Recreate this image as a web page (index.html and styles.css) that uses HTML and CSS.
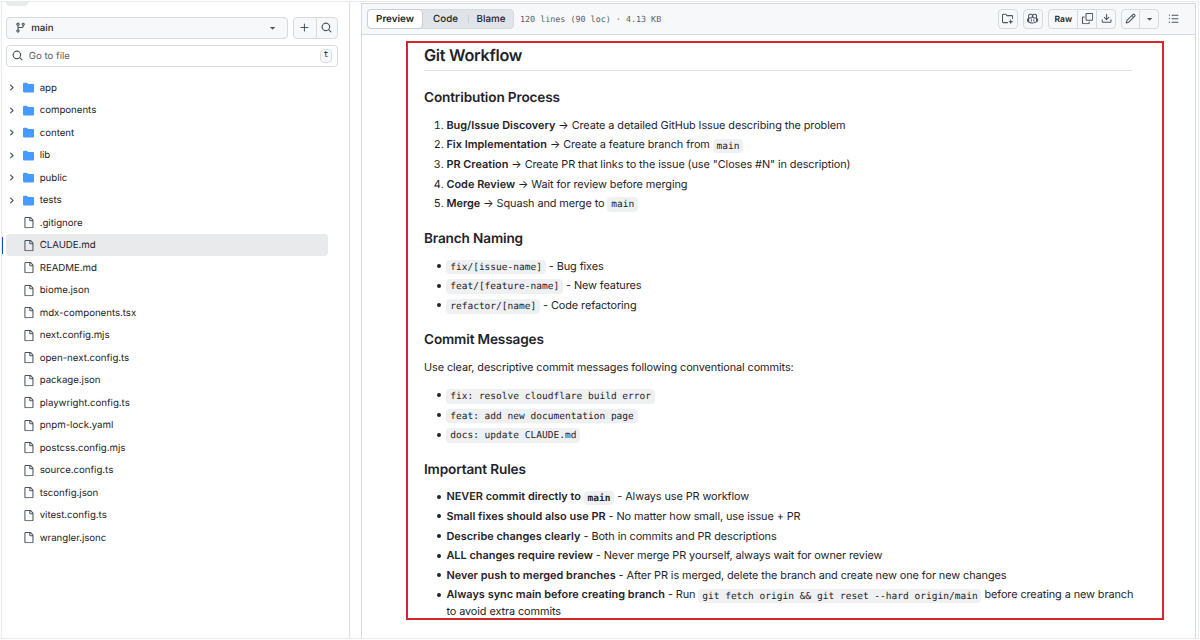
FILE: index.html
```html
<!DOCTYPE html>
<html lang="en">
<head>
<meta charset="utf-8">
<title>CLAUDE.md</title>
<link rel="stylesheet" href="styles.css">
</head>
<body>
<svg class="defs" width="0" height="0">
  <symbol id="branch" viewBox="0 0 16 16"><path d="M9.5 3.25a2.25 2.25 0 1 1 3 2.122V6A2.5 2.5 0 0 1 10 8.5H6a1 1 0 0 0-1 1v1.128a2.251 2.251 0 1 1-1.5 0V5.372a2.25 2.25 0 1 1 1.5 0v1.836A2.493 2.493 0 0 1 6 7h4a1 1 0 0 0 1-1v-.628A2.25 2.25 0 0 1 9.5 3.25Zm-6 0a.75.75 0 1 0 1.5 0 .75.75 0 0 0-1.5 0Zm8.25-.75a.75.75 0 1 0 0 1.5.75.75 0 0 0 0-1.5ZM4.25 12a.75.75 0 1 0 0 1.5.75.75 0 0 0 0-1.5Z"/></symbol>
  <symbol id="search" viewBox="0 0 16 16"><path d="M10.68 11.74a6 6 0 0 1-7.922-8.982 6 6 0 0 1 8.982 7.922l3.04 3.04a.749.749 0 0 1-.326 1.275.749.749 0 0 1-.734-.215ZM11.5 7a4.499 4.499 0 1 0-8.997 0A4.499 4.499 0 0 0 11.5 7Z"/></symbol>
  <symbol id="plus" viewBox="0 0 16 16"><path d="M7.75 2a.75.75 0 0 1 .75.75V7h4.25a.75.75 0 0 1 0 1.5H8.5v4.25a.75.75 0 0 1-1.5 0V8.5H2.75a.75.75 0 0 1 0-1.5H7V2.75A.75.75 0 0 1 7.75 2Z"/></symbol>
  <symbol id="caret" viewBox="0 0 16 16"><path d="m4.427 7.427 3.396 3.396a.25.25 0 0 0 .354 0l3.396-3.396A.25.25 0 0 0 11.396 7H4.604a.25.25 0 0 0-.177.427Z"/></symbol>
  <symbol id="chevron" viewBox="0 0 12 12"><path d="M4.7 10c-.2 0-.4-.1-.5-.2-.3-.3-.3-.8 0-1.1L6.9 6 4.2 3.300c-.3-.3-.3-.8 0-1.100.3-.3.8-.3 1.100 0l3.300 3.200c.3.3.3.8 0 1.100L5.300 9.700c-.2.2-.4.3-.6.3Z"/></symbol>
  <symbol id="folder" viewBox="0 0 16 16"><path d="M1.75 1A1.75 1.75 0 0 0 0 2.750v10.500C0 14.216.784 15 1.750 15h12.500A1.750 1.750 0 0 0 16 13.250v-8.500A1.750 1.750 0 0 0 14.250 3H7.500a.25.25 0 0 1-.2-.1l-.9-1.200C6.070 1.260 5.550 1 5 1H1.750Z"/></symbol>
  <symbol id="file" viewBox="0 0 16 16"><path d="M2 1.75C2 .784 2.784 0 3.750 0h6.586c.464 0 .909.184 1.237.513l2.914 2.914c.329.328.513.773.513 1.237v9.586A1.750 1.750 0 0 1 13.250 16h-9.500A1.750 1.750 0 0 1 2 14.250Zm1.750-.25a.25.25 0 0 0-.25.25v12.500c0 .138.112.25.25.25h9.500a.25.25 0 0 0 .25-.25V6h-2.750A1.750 1.750 0 0 1 9 4.250V1.500Zm6.750.062V4.250c0 .138.112.25.25.25h2.688l-.011-.013-2.914-2.914-.013-.011Z"/></symbol>
  <symbol id="copy" viewBox="0 0 16 16"><path d="M0 6.750C0 5.784.784 5 1.750 5h1.500a.75.75 0 0 1 0 1.500h-1.500a.25.25 0 0 0-.25.25v7.500c0 .138.112.25.25.25h7.500a.25.25 0 0 0 .25-.25v-1.500a.75.75 0 0 1 1.500 0v1.500A1.750 1.750 0 0 1 9.250 16h-7.500A1.750 1.750 0 0 1 0 14.250Z"/><path d="M5 1.750C5 .784 5.784 0 6.750 0h7.500C15.216 0 16 .784 16 1.750v7.500A1.750 1.750 0 0 1 14.250 11h-7.500A1.750 1.750 0 0 1 5 9.250Zm1.750-.25a.25.25 0 0 0-.25.25v7.500c0 .138.112.25.25.25h7.500a.25.25 0 0 0 .25-.25v-7.500a.25.25 0 0 0-.25-.25Z"/></symbol>
  <symbol id="download" viewBox="0 0 16 16"><path d="M2.750 14A1.750 1.750 0 0 1 1 12.250v-2.500a.75.75 0 0 1 1.500 0v2.500c0 .138.112.25.25.25h10.500a.25.25 0 0 0 .25-.25v-2.500a.75.75 0 0 1 1.500 0v2.500A1.750 1.750 0 0 1 13.250 14Z"/><path d="M7.250 7.689V2a.75.75 0 0 1 1.500 0v5.689l1.970-1.969a.749.749 0 1 1 1.060 1.060l-3.250 3.250a.749.749 0 0 1-1.060 0L4.220 6.780a.749.749 0 1 1 1.060-1.060l1.970 1.969Z"/></symbol>
  <symbol id="pencil" viewBox="0 0 16 16"><path d="M11.013 1.427a1.750 1.750 0 0 1 2.474 0l1.086 1.086a1.750 1.750 0 0 1 0 2.474l-8.610 8.610c-.21.21-.47.364-.756.445l-3.251.930a.75.75 0 0 1-.927-.928l.929-3.250c.081-.286.235-.547.445-.758l8.610-8.610Zm.176 4.823L9.750 4.810l-6.286 6.287a.253.253 0 0 0-.064.108l-.558 1.953 1.953-.558a.253.253 0 0 0 .108-.064Zm1.238-3.763a.25.25 0 0 0-.354 0L10.811 3.750l1.439 1.440 1.263-1.263a.25.25 0 0 0 0-.354Z"/></symbol>
  <symbol id="list" viewBox="0 0 16 16"><path d="M5.750 2.500h8.500a.75.75 0 0 1 0 1.500h-8.500a.75.75 0 0 1 0-1.500Zm0 5h8.500a.75.75 0 0 1 0 1.500h-8.500a.75.75 0 0 1 0-1.500Zm0 5h8.500a.75.75 0 0 1 0 1.500h-8.500a.75.75 0 0 1 0-1.500ZM2 14a1 1 0 1 1 0-2 1 1 0 0 1 0 2Zm1-6a1 1 0 1 1-2 0 1 1 0 0 1 2 0ZM2 4a1 1 0 1 1 0-2 1 1 0 0 1 0 2Z"/></symbol>
  <symbol id="newspace" viewBox="0 0 16 16"><path d="M8 13.750H2A1.250 1.250 0 0 1 .75 12.500V3A1.250 1.250 0 0 1 2 1.750h3c.4 0 .8.2 1 .5l.8 1.100c.2.3.5.4.9.4H14A1.250 1.250 0 0 1 15.250 5v3" fill="none" stroke="currentColor" stroke-width="1.500" stroke-linecap="round"/><path d="M12.500 8.500 13.500 11.500 16.300 12.500 13.500 13.500 12.500 16.300 11.500 13.500 8.700 12.500 11.500 11.500Z"/></symbol>
  <symbol id="copilot" viewBox="0 0 16 16"><path d="M7.998 15.035c-4.562 0-7.873-2.914-7.998-3.749V9.338c.085-.628.677-1.686 1.588-2.065.013-.07.024-.143.036-.218.029-.183.060-.384.126-.612-.201-.508-.254-1.084-.254-1.656 0-.870.128-1.769.693-2.484.579-.733 1.494-1.124 2.724-1.261 1.206-.134 2.262.034 2.944.765.050.053.096.108.139.165.044-.057.094-.112.143-.165.682-.731 1.738-.899 2.944-.765 1.230.137 2.145.528 2.724 1.261.566.715.693 1.614.693 2.484 0 .572-.053 1.148-.254 1.656.066.228.098.429.126.612.012.076.024.148.037.218.924.385 1.522 1.471 1.591 2.095v1.872c0 .766-3.351 3.795-8.002 3.795Zm0-1.485c2.280 0 4.584-1.110 5.002-1.433V7.862l-.023-.116c-.490.210-1.075.291-1.727.291-1.146 0-2.059-.327-2.710-.991A3.222 3.222 0 0 1 8 6.303a3.240 3.240 0 0 1-.544.743c-.650.664-1.563.991-2.710.991-.652 0-1.236-.081-1.727-.291l-.023.116v4.255c.419.323 2.722 1.433 5.002 1.433ZM6.762 2.830c-.193-.206-.637-.413-1.682-.297-1.019.113-1.479.404-1.713.700-.247.312-.369.789-.369 1.554 0 .793.129 1.171.308 1.371.162.181.519.379 1.442.379.853 0 1.339-.235 1.638-.540.315-.322.527-.827.617-1.553.117-.935-.037-1.395-.241-1.614Zm4.155-.297c-1.044-.116-1.488.091-1.681.297-.204.219-.359.679-.242 1.614.091.726.303 1.231.618 1.553.299.305.784.540 1.638.540.922 0 1.280-.198 1.442-.379.179-.200.308-.578.308-1.371 0-.765-.123-1.242-.370-1.554-.233-.296-.693-.587-1.713-.700Z"/><path d="M6.250 9.037a.75.75 0 0 1 .75.75v1.501a.75.75 0 0 1-1.500 0V9.787a.75.75 0 0 1 .75-.75Zm4.250.75v1.501a.75.75 0 0 1-1.500 0V9.787a.75.75 0 0 1 1.500 0Z"/></symbol>
</svg>

<div class="window">
  <aside class="sidebar">
    <div class="stub"></div>
    <div class="ref-row">
      <div class="branch-select"><svg class="icon"><use href="#branch"/></svg><span class="branch-name">main</span><svg class="icon"><use href="#caret"/></svg></div>
      <div class="group">
        <span class="cell plus-cell"><svg class="icon"><use href="#plus"/></svg></span>
        <span class="cell search-cell"><svg class="icon"><use href="#search"/></svg></span>
      </div>
    </div>
    <div class="file-search"><svg class="icon"><use href="#search"/></svg><span class="placeholder">Go to file</span><kbd class="key">t</kbd></div>
    <ul class="tree">
      <li class="node"><svg class="chev"><use href="#chevron"/></svg><svg class="icon dir"><use href="#folder"/></svg><span class="name">app</span></li>
      <li class="node"><svg class="chev"><use href="#chevron"/></svg><svg class="icon dir"><use href="#folder"/></svg><span class="name">components</span></li>
      <li class="node"><svg class="chev"><use href="#chevron"/></svg><svg class="icon dir"><use href="#folder"/></svg><span class="name">content</span></li>
      <li class="node"><svg class="chev"><use href="#chevron"/></svg><svg class="icon dir"><use href="#folder"/></svg><span class="name">lib</span></li>
      <li class="node"><svg class="chev"><use href="#chevron"/></svg><svg class="icon dir"><use href="#folder"/></svg><span class="name">public</span></li>
      <li class="node"><svg class="chev"><use href="#chevron"/></svg><svg class="icon dir"><use href="#folder"/></svg><span class="name">tests</span></li>
      <li class="node leaf"><svg class="icon"><use href="#file"/></svg><span class="name">.gitignore</span></li>
      <li class="node leaf current"><svg class="icon"><use href="#file"/></svg><span class="name">CLAUDE.md</span></li>
      <li class="node leaf"><svg class="icon"><use href="#file"/></svg><span class="name">README.md</span></li>
      <li class="node leaf"><svg class="icon"><use href="#file"/></svg><span class="name">biome.json</span></li>
      <li class="node leaf"><svg class="icon"><use href="#file"/></svg><span class="name">mdx-components.tsx</span></li>
      <li class="node leaf"><svg class="icon"><use href="#file"/></svg><span class="name">next.config.mjs</span></li>
      <li class="node leaf"><svg class="icon"><use href="#file"/></svg><span class="name">open-next.config.ts</span></li>
      <li class="node leaf"><svg class="icon"><use href="#file"/></svg><span class="name">package.json</span></li>
      <li class="node leaf"><svg class="icon"><use href="#file"/></svg><span class="name">playwright.config.ts</span></li>
      <li class="node leaf"><svg class="icon"><use href="#file"/></svg><span class="name">pnpm-lock.yaml</span></li>
      <li class="node leaf"><svg class="icon"><use href="#file"/></svg><span class="name">postcss.config.mjs</span></li>
      <li class="node leaf"><svg class="icon"><use href="#file"/></svg><span class="name">source.config.ts</span></li>
      <li class="node leaf"><svg class="icon"><use href="#file"/></svg><span class="name">tsconfig.json</span></li>
      <li class="node leaf"><svg class="icon"><use href="#file"/></svg><span class="name">vitest.config.ts</span></li>
      <li class="node leaf"><svg class="icon"><use href="#file"/></svg><span class="name">wrangler.jsonc</span></li>
    </ul>
  </aside>

  <main class="panel">
    <header class="toolbar">
      <div class="tabs"><span class="tab active">Preview</span><span class="tab code-tab">Code</span><span class="tab blame-tab">Blame</span></div>
      <span class="meta">120 lines (90 loc) · 4.13 KB</span>
      <div class="actions">
        <div class="group"><span class="cell"><svg class="icon"><use href="#newspace"/></svg></span></div>
        <div class="group"><span class="cell"><svg class="icon"><use href="#copilot"/></svg></span></div>
        <div class="group"><span class="cell raw">Raw</span><span class="cell"><svg class="icon"><use href="#copy"/></svg></span><span class="cell"><svg class="icon"><use href="#download"/></svg></span></div>
        <div class="group edit"><span class="cell"><svg class="icon"><use href="#pencil"/></svg></span><span class="cell"><svg class="icon"><use href="#caret"/></svg></span></div>
        <svg class="icon outline"><use href="#list"/></svg>
      </div>
    </header>
    <article class="markdown">
      <h2>Git Workflow</h2>
      <h3>Contribution Process</h3>
      <ol>
        <li><strong>Bug/Issue Discovery</strong> → Create a detailed GitHub Issue describing the problem</li>
        <li><strong>Fix Implementation</strong> → Create a feature branch from <code>main</code></li>
        <li><strong>PR Creation</strong> → Create PR that links to the issue (use "Closes #N" in description)</li>
        <li><strong>Code Review</strong> → Wait for review before merging</li>
        <li><strong>Merge</strong> → Squash and merge to <code>main</code></li>
      </ol>
      <h3>Branch Naming</h3>
      <ul>
        <li><code>fix/[issue-name]</code> - Bug fixes</li>
        <li><code>feat/[feature-name]</code> - New features</li>
        <li><code>refactor/[name]</code> - Code refactoring</li>
      </ul>
      <h3>Commit Messages</h3>
      <p>Use clear, descriptive commit messages following conventional commits:</p>
      <ul>
        <li><code>fix: resolve cloudflare build error</code></li>
        <li><code>feat: add new documentation page</code></li>
        <li><code>docs: update CLAUDE.md</code></li>
      </ul>
      <h3>Important Rules</h3>
      <ul>
        <li><strong>NEVER commit directly to <code>main</code></strong> - Always use PR workflow</li>
        <li><strong>Small fixes should also use PR</strong> - No matter how small, use issue + PR</li>
        <li><strong>Describe changes clearly</strong> - Both in commits and PR descriptions</li>
        <li><strong>ALL changes require review</strong> - Never merge PR yourself, always wait for owner review</li>
        <li><strong>Never push to merged branches</strong> - After PR is merged, delete the branch and create new one for new changes</li>
        <li><strong>Always sync main before creating branch</strong> - Run <code>git fetch origin &amp;&amp; git reset --hard origin/main</code> before creating a new branch<br>to avoid extra commits</li>
      </ul>
    </article>
  </main>
  <div class="highlight"></div>
</div>
</body>
</html>
```

FILE: styles.css
```css
* { box-sizing: border-box; }
body {
  margin: 0;
  height: 640px;
  overflow: hidden;
  padding: 1px;
  background: #fdfdfd;
  font-family: Inter, "Noto Sans", sans-serif;
  color: #1f2328;
  text-rendering: geometricPrecision;
}
.defs { position: absolute; }
.window {
  height: 638px;
  display: flex;
  border: 1px solid #e9ebec;
  background: #fff;
}
.icon { width: 11.2px; height: 11.2px; flex: none; fill: currentColor; color: #4c555f; overflow: visible; }

.sidebar {
  width: 348px;
  flex: none;
  padding-left: 4px;
  border-right: 1px solid #dce0e4;
  font-size: 9.7px;
}
.stub { width: 22px; height: 4px; border-radius: 0 0 4px 4px; background: #e9eaec; }
.ref-row { display: flex; gap: 5px; margin-top: 11px; }
.branch-select {
  width: 282px;
  height: 22px;
  display: flex;
  align-items: center;
  gap: 5px;
  padding: 0 9px 0 8px;
  border: 1px solid #d5dae0;
  border-radius: 4px;
  background: #f6f8fa;
}
.branch-name { flex: 1; padding-top: 1px; font-weight: 500; }
.group {
  display: flex;
  height: 20px;
  border: 1px solid #d5dae0;
  border-radius: 4px;
  background: #f6f8fa;
}
.ref-row .group { height: 22px; width: 45px; }
.cell { width: 17.5px; display: flex; align-items: center; justify-content: center; }
.cell + .cell { width: 19px; border-left: 1px solid #d5dae0; }
.ref-row .plus-cell { width: 22px; }
.ref-row .search-cell { width: 21px; }
.file-search {
  width: 332px;
  height: 22px;
  margin-top: 6px;
  padding: 0 5px;
  display: flex;
  align-items: center;
  gap: 5.5px;
  border: 1px solid #d5dae0;
  border-radius: 4px;
}
.placeholder { flex: 1; padding-top: 1px; color: #59636e; }
.key {
  width: 12px;
  height: 14px;
  border: 1px solid #d9dde2;
  border-radius: 4px;
  background: #f6f8fa;
  font: 8.5px/11px "DejaVu Sans Mono", monospace;
  text-align: center;
}
.tree { list-style: none; margin: 9.4px 0 0; padding: 0; }
.node {
  position: relative;
  display: flex;
  align-items: center;
  gap: 5.5px;
  height: 22.5px;
  width: 322px;
  padding-left: 1px;
  border-radius: 4px;
}
.name { padding-top: 1px; letter-spacing: -0.03px; }
.chev { width: 9px; height: 9px; fill: #4c555f; margin-right: 1.5px; }
.dir { color: #479aff; }
.leaf { padding-left: 17px; }
.current { background: #e9eaec; }
.current::before {
  content: "";
  position: absolute;
  left: -4px;
  top: 3px;
  width: 1px;
  height: 17px;
  background: #0b4fbf;
}

.panel {
  margin-left: 11px;
  margin-top: 1px;
  width: 835px;
  border: 1px solid #d5dae0;
  border-bottom: 0;
}
.toolbar {
  height: 31px;
  display: flex;
  align-items: center;
  padding: 0 16px 0 5px;
  border-bottom: 1px solid #d5dae0;
  background: #f6f8fa;
}
.tabs {
  display: flex;
  width: 147px;
  height: 20px;
  border-radius: 4px;
  background: #e0e4e9;
  border: 1px solid #d5dae0;
  font-size: 9.8px;
  line-height: 19.5px;
  font-weight: 500;
  text-align: center;
}
.tab.active { width: 56px; margin: -1px 0 -1px -1px; border: 1px solid #c9cfd6; border-radius: 4px; background: #fff; font-weight: 600; }
.code-tab { width: 45px; }
.blame-tab { flex: 1; }
.blame-tab::before {
  content: "";
  float: left;
  width: 1px;
  height: 8px;
  margin-top: 5px;
  background: #c9cfd6;
}
.meta { margin-left: 6px; color: #59636e; font: 8.4px "DejaVu Sans Mono", monospace; white-space: nowrap; }
.actions { display: flex; align-items: center; gap: 5.5px; margin-left: auto; }
.raw { width: 28px; padding-top: 1px; font-size: 8.5px; font-weight: 600; }
.edit { margin-left: -1px; }
.outline { margin-left: 3px; }

.markdown { width: 708px; margin: 10px 0 0 62px; font-size: 10.9px; line-height: 16.8px; letter-spacing: -0.09px; white-space: nowrap; }
.markdown h2 { margin: 0; padding-bottom: 4.4px; border-bottom: 1px solid #dfe2e6; font-size: 16.2px; line-height: 21px; font-weight: 600; letter-spacing: -0.27px; }
.markdown h3 { margin: 17.8px 0 9.2px; font-size: 13.6px; line-height: 18.5px; font-weight: 600; letter-spacing: -0.14px; }
.markdown p { margin: 0 0 11.2px; }
.markdown ol, .markdown ul { margin: 0 0 11.2px; padding-left: 22.4px; }
.markdown ul { list-style: none; }
.markdown ul li::before {
  content: "";
  display: inline-block;
  width: 4px;
  height: 4px;
  margin: 0 5.6px 0 -9.6px;
  border-radius: 50%;
  background: #1f2328;
  vertical-align: 1.6px;
}
.markdown li + li { margin-top: 2.8px; }
.markdown strong { font-weight: 600; letter-spacing: 0.02px; }
.markdown code {
  padding: 1.9px 3.8px;
  border-radius: 4px;
  background: #eff0f2;
  font: 9.52px "DejaVu Sans Mono", monospace;
  letter-spacing: 0.01px;
}
.markdown strong code { font-weight: 700; }
.highlight {
  position: absolute;
  left: 406px;
  top: 41px;
  width: 758px;
  height: 579px;
  border: 2px solid #d9262d;
}
```
